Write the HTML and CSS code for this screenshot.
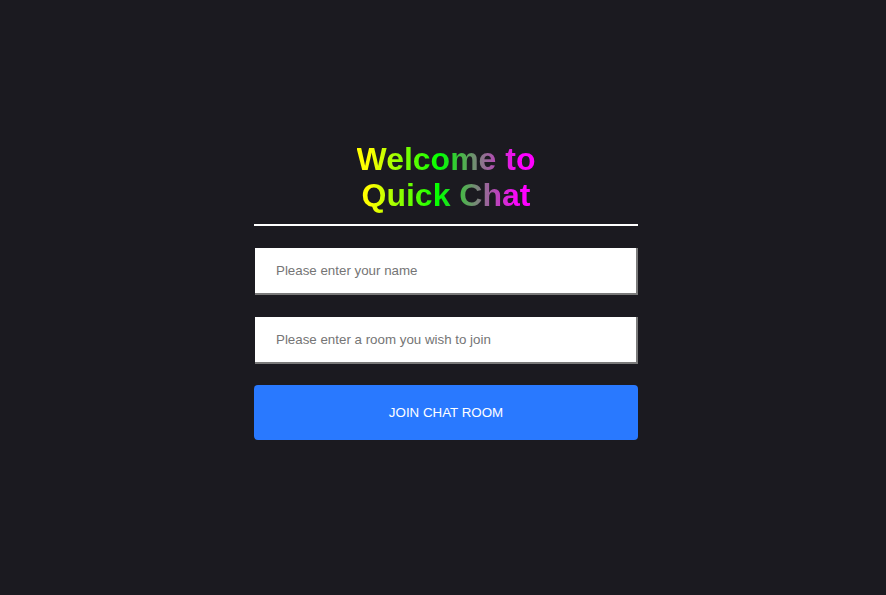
FILE: index.html
```html
<!DOCTYPE html>
<html lang="en">
<head>
<meta charset="utf-8">
<title>Quick Chat</title>
<link rel="stylesheet" href="styles.css">
</head>
<body>
<main class="page">
  <form class="join-form">
    <div class="heading">
      <h1 class="title">Welcome to<br>Quick Chat</h1>
    </div>
    <input class="field" type="text" placeholder="Please enter your name">
    <input class="field" type="text" placeholder="Please enter a room you wish to join">
    <button class="join-btn" type="button">JOIN CHAT ROOM</button>
  </form>
</main>
</body>
</html>
```
FILE: styles.css
```css
html, body {
  margin: 0;
  padding: 0;
  background: #1b1a20;
  height: 100%;
}
.page {
  display: flex;
  justify-content: center;
  padding-left: 6px;
  padding-top: 141px;
  box-sizing: border-box;
  min-height: 100%;
}
.join-form {
  width: 384px;
  display: flex;
  flex-direction: column;
  gap: 22px;
}
.heading {
  text-align: center;
  border-bottom: 2px solid #ffffff;
  padding-bottom: 11px;
}
.title {
  display: inline-block;
  margin: 0;
  font-family: "Liberation Sans", Arial, sans-serif;
  font-weight: bold;
  font-size: 32px;
  line-height: 36px;
  background: linear-gradient(to right, #ffff00 7%, #00ff00 46%, #ff00ff 90%);
  -webkit-background-clip: text;
  background-clip: text;
  color: transparent;
}
.field {
  height: 47px;
  box-sizing: border-box;
  margin: 0 0 0 1px;
  width: 383px;
  border: none;
  border-right: 2px solid #7a7a7a;
  border-bottom: 2px solid #7a7a7a;
  background: #ffffff;
  padding: 0 20px 0 21px;
  font-family: "Liberation Sans", Arial, sans-serif;
  font-size: 13.333px;
  color: #333;
  outline: none;
}
.field::placeholder {
  color: #757575;
}
.join-btn {
  height: 55px;
  margin-top: -1px;
  border: none;
  border-radius: 4px;
  background: #2979ff;
  color: #ffffff;
  font-family: "Liberation Sans", Arial, sans-serif;
  font-size: 13.333px;
  cursor: pointer;
}
```
